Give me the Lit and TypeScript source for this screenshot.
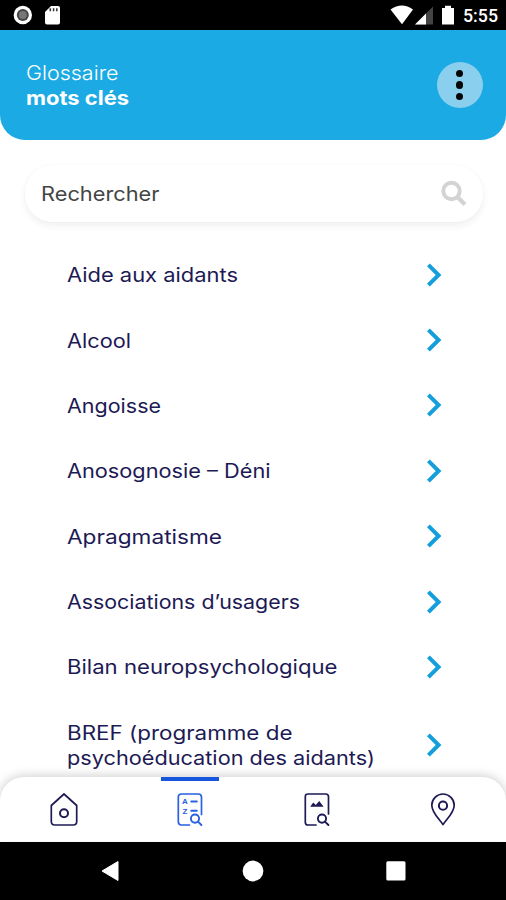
import { LitElement, html, css, svg } from "lit";
import { customElement, property } from "lit/decorators.js";
import { styleMap } from "lit/directives/style-map.js";

/** A line of text widened so that it spans a given width. */
@customElement("wide-line")
class WideLine extends LitElement {
  static styles = css`
    :host { display: block; white-space: nowrap; }
    .line { display: inline-block; transform-origin: 0 50%; }
  `;
  @property() text = "";
  @property({ type: Number }) span = 0;
  @property({ type: Number, attribute: false }) stretch = 1;

  async firstUpdated() {
    await document.fonts.ready;
    const line = this.renderRoot.querySelector(".line") as HTMLElement;
    this.stretch = this.span / line.getBoundingClientRect().width;
  }

  render() {
    return html`<span class="line" style=${styleMap({ transform: `scaleX(${this.stretch})` })}>${this.text}</span>`;
  }
}

type Line = [string, number];

const TERMS: Line[][] = [
  [["Aide aux aidants", 171]],
  [["Alcool", 64]],
  [["Angoisse", 94]],
  [["Anosognosie – Déni", 203.5]],
  [["Apragmatisme", 155]],
  [["Associations d’usagers", 233]],
  [["Bilan neuropsychologique", 270.5]],
  [["BREF (programme de", 225.5], ["psychoéducation des aidants)", 308]],
];

const magnifier = svg`<circle cx="18" cy="25.6" r="4.1" stroke-width="1.9"/><path d="M21.2 28.8l3.2 3.2" stroke-width="1.9"/>`;

@customElement("app-root")
class AppRoot extends LitElement {
  static styles = css`
    :host {
      display: flex; flex-direction: column; width: 506px; height: 900px;
      overflow: hidden; background: #fff; color: #1d1a55;
      font: 400 19.6px/25px Inter, "Open Sans", sans-serif;
    }
    * { box-sizing: border-box; }
    svg { display: block; flex: none; }
    .status { height: 30px; flex: none; background: #000; display: flex; align-items: center; padding: 0 8px 0 13px; }
    .clock { font: 500 18px/30px Roboto, sans-serif; color: #fff; width: 35px; padding-top: 1px; }
    .grow { flex: 1; }
    .header {
      height: 110px; flex: none; background: #1caae4; border-radius: 0 0 25px 25px;
      display: flex; justify-content: space-between; align-items: center; padding: 0 23.5px 0 25.5px; color: #fff;
    }
    .title { font-size: 20px; line-height: 25px; font-weight: 300; padding-top: 2px; }
    .strong { font-weight: 700; }
    .more {
      width: 46px; height: 46px; border-radius: 50%; background: #8ad0ee; border: 0;
      display: flex; flex-direction: column; align-items: center; justify-content: center; gap: 4px;
    }
    .dot { width: 7.2px; height: 7.2px; border-radius: 50%; background: #050505; }
    .search {
      height: 57px; flex: none; margin: 25px 23px 20px 25px; border-radius: 27px; background: #fff;
      box-shadow: 0 4px 7px rgba(40, 40, 80, .065), 0 0 2px rgba(40, 40, 80, .05);
      display: flex; align-items: center; justify-content: space-between; padding: 1px 15px 0 15.5px; color: #444;
    }
    .list { flex: 1; min-height: 0; overflow: hidden; }
    .row { display: flex; align-items: center; justify-content: space-between; padding: 20.2px 64px 20.2px 66.5px; }
    .terms { padding-top: 1px; margin-bottom: -1px; }
    .tabs {
      height: 64.5px; flex: none; position: relative; background: #fff; border-radius: 24px 24px 0 0;
      box-shadow: 0 -1px 11px rgba(0, 0, 0, .2); display: grid; grid-template-columns: repeat(4, 1fr);
      padding-left: 1px; clip-path: inset(-20px 0 0 0);
    }
    .tab { display: flex; flex-direction: column; align-items: center; padding-top: 12px; border-top: 4px solid transparent; width: 58px; justify-self: center; }
    .active { border-color: #1556dc; color: #2862e0; }
    .icon { fill: none; stroke: currentColor; stroke-width: 1.7; stroke-linecap: round; stroke-linejoin: round; }
    .letters { font: 700 8px "Liberation Sans", sans-serif; fill: currentColor; stroke: none; }
    .system { height: 58.5px; flex: none; background: #000; display: flex; align-items: center; justify-content: center; gap: 122px; }
  `;

  render() {
    return html`
      <div class="status">
        <svg width="50" height="30" viewBox="0 0 50 30">
          <circle cx="9.8" cy="15" r="9.2" fill="#fff"/><circle cx="9.8" cy="15" r="6" fill="#444"/><circle cx="9.8" cy="15" r="4" fill="#777"/>
          <path d="M38 6H45Q47 6 47 8V22.5Q47 24.5 45 24.5H34Q32 24.5 32 22.5V12Z" fill="#fff"/>
          <path d="M37.3 8.3v3M40.6 8.3v3M43.8 8.3v3" stroke="#333" stroke-width="1.5"/>
        </svg>
        <div class="grow"></div>
        <svg width="73" height="30" viewBox="390 0 73 30">
          <path d="M390.5 9.4Q402 1.8 413 9.4L402 24.2Z" fill="#fff"/>
          <path d="M433 6.5V24.5H415Z" fill="#444"/><path d="M426 13.5V24.5H415Z" fill="#fff"/>
          <path d="M442 8H445V5.8H451V8H454V24.5H442Z" fill="#fff"/>
        </svg>
        <div class="clock"><wide-line text="5:55" .span=${35}></wide-line></div>
      </div>
      <div class="header">
        <div class="title">
          <wide-line text="Glossaire" .span=${92.5}></wide-line>
          <wide-line class="strong" text="mots clés" .span=${103}></wide-line>
        </div>
        <button class="more" aria-label="Menu"><i class="dot"></i><i class="dot"></i><i class="dot"></i></button>
      </div>
      <div class="search">
        <wide-line text="Rechercher" .span=${118.5}></wide-line>
        <svg width="28" height="28" viewBox="0 0 28 28" fill="none" stroke="#d3d3d3">
          <circle cx="11.5" cy="11" r="8.2" stroke-width="3.9"/><path d="M17.4 16.9L25 24.5" stroke-width="4.2"/>
        </svg>
      </div>
      <div class="list">
        ${TERMS.map((lines) => html`
          <div class="row">
            <div class="terms">${lines.map(([text, span]) => html`<wide-line .text=${text} .span=${span}></wide-line>`)}</div>
            <svg width="16" height="24" viewBox="0 0 16 24" fill="none" stroke="#149fdc" stroke-width="4"><path d="M2.4 1.8L12.6 12L2.4 22.2"/></svg>
          </div>`)}
      </div>
      <div class="tabs">
        <div class="tab">
          <svg class="icon" width="28" height="36" viewBox="0 0 28 36"><path d="M14 1L26.7 12.5V28.5Q26.7 32 23.2 32H4.8Q1.3 32 1.3 28.5V12.5Z"/><circle cx="14" cy="20.3" r="4" stroke-width="2"/></svg>
        </div>
        <div class="tab active">
          <svg class="icon" width="26" height="36" viewBox="0 0 26 36">
            <path d="M12.5 32H4.5Q1.3 32 1.3 28.8V4.2Q1.3 1 4.5 1H21.3Q24.5 1 24.5 4.2V21.5"/>
            <text class="letters" x="5" y="11.2">A</text><text class="letters" x="5.4" y="21.2">Z</text>
            <path d="M14.3 8.5H19.8M14.3 17.8H19.8" stroke-width="2"/>${magnifier}
          </svg>
        </div>
        <div class="tab">
          <svg class="icon" width="26" height="36" viewBox="0 0 26 36">
            <path d="M12 32H4Q1.3 32 1.3 29.3V3.7Q1.3 1 4 1H21.8Q24.5 1 24.5 3.7V21"/>
            <path d="M6.2 13.8L9.2 9.6L11.8 12L15.2 8L19.6 13.8Z" fill="currentColor" stroke="none"/>${magnifier}
          </svg>
        </div>
        <div class="tab">
          <svg class="icon" width="26" height="36" viewBox="0 0 26 36"><path d="M13 31.7C10 26.5 1.8 20 1.8 12.2A11.2 11.2 0 0 1 24.2 12.2C24.2 20 16 26.5 13 31.7Z"/><circle cx="13" cy="12.7" r="4.1" stroke-width="2"/></svg>
        </div>
      </div>
      <div class="system">
        <svg width="20" height="22" viewBox="0 0 20 22"><path d="M18 1.5V20.5L2 11Z" fill="#fff" stroke="#fff" stroke-linejoin="round"/></svg>
        <svg width="22" height="22" viewBox="0 0 22 22"><circle cx="11" cy="11" r="10.4" fill="#fff"/></svg>
        <svg width="20" height="20" viewBox="0 0 20 20"><rect x=".3" y=".3" width="19.2" height="19.2" rx="1.5" fill="#fff"/></svg>
      </div>
    `;
  }
}
